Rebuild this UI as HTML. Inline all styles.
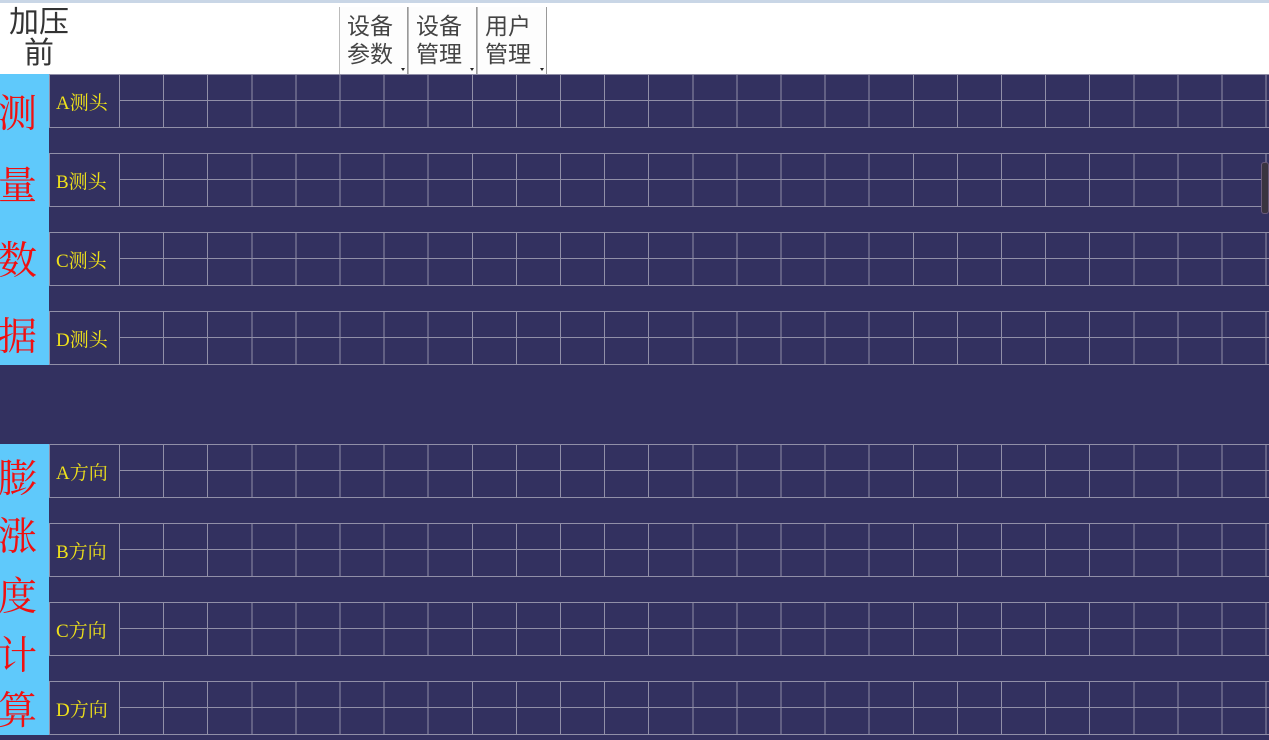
<!DOCTYPE html>
<html><head><meta charset="utf-8"><style>
*{margin:0;padding:0;box-sizing:border-box}
body{width:1269px;height:740px;overflow:hidden;background:#333160;position:relative;font-family:"Liberation Sans","Noto Sans CJK SC",sans-serif}
.top{position:absolute;left:0;top:0;width:1269px;height:74px;background:#fff;border-top:3px solid #c9d6e6}
.title{position:absolute;left:6px;top:4px;font-size:30px;line-height:31px;color:#333;text-align:center;width:66px}
.btn{position:absolute;top:4px;height:68px;border-left:1px solid #bbb;border-right:1px solid #999;border-bottom:1px solid #888;background:#fdfdfd;font-size:23px;line-height:28px;color:#444;padding:5px 0 0 7px}
.btn:after{content:"";position:absolute;right:2px;bottom:3px;border-left:2px solid transparent;border-right:2px solid transparent;border-top:3px solid #222}
.blue{position:absolute;left:0;width:49px;background:#5fc9fb}
.rc{position:absolute;left:-2px;font-family:"Liberation Serif","Noto Serif CJK SC",serif;font-size:39px;color:#f01010;line-height:40px}
.blk{position:absolute;left:49px;width:1220px;height:54px;border-top:1px solid #918fa8;border-bottom:1px solid #918fa8;border-left:1px solid #918fa8}
.lab{position:absolute;left:0;top:3px;width:70px;height:52px;color:#f0e21a;font-family:"Liberation Serif","Noto Serif CJK SC",serif;font-size:19px;line-height:52px;padding-left:6px}
.grid{position:absolute;left:69px;top:0;width:1151px;height:52px;background:repeating-linear-gradient(to right,#918fa8 0 1px,transparent 1px 44.1px)}
.grid:after{content:"";position:absolute;left:0;right:0;top:25px;height:1px;background:#918fa8}
</style></head><body>
<div class="top">
<div class="title">加压<br>前</div>
<div class="btn" style="left:339px;width:69px">设备<br>参数</div>
<div class="btn" style="left:408px;width:69px">设备<br>管理</div>
<div class="btn" style="left:477px;width:70px">用户<br>管理</div>
</div>
<div class="blue" style="top:74px;height:291px"></div>
<div class="blue" style="top:444px;height:291px"></div>
<div class="rc" style="top:95px">测</div>
<div class="rc" style="top:167px">量</div>
<div class="rc" style="top:242px">数</div>
<div class="rc" style="top:318px">据</div>
<div class="rc" style="top:460px">膨</div>
<div class="rc" style="top:518px">涨</div>
<div class="rc" style="top:578px">度</div>
<div class="rc" style="top:637px">计</div>
<div class="rc" style="top:692px">算</div>
<div class="blk" style="top:74px"><div class="lab">A测头</div><div class="grid"></div></div>
<div class="blk" style="top:153px"><div class="lab">B测头</div><div class="grid"></div></div>
<div class="blk" style="top:232px"><div class="lab">C测头</div><div class="grid"></div></div>
<div class="blk" style="top:311px"><div class="lab">D测头</div><div class="grid"></div></div>
<div class="blk" style="top:444px"><div class="lab">A方向</div><div class="grid"></div></div>
<div class="blk" style="top:523px"><div class="lab">B方向</div><div class="grid"></div></div>
<div class="blk" style="top:602px"><div class="lab">C方向</div><div class="grid"></div></div>
<div class="blk" style="top:681px"><div class="lab">D方向</div><div class="grid"></div></div>
<div style="position:absolute;left:1261px;top:162px;width:8px;height:52px;background:#3a3440;border:1px solid #6a5a7a;border-radius:3px"></div>
</body></html>
